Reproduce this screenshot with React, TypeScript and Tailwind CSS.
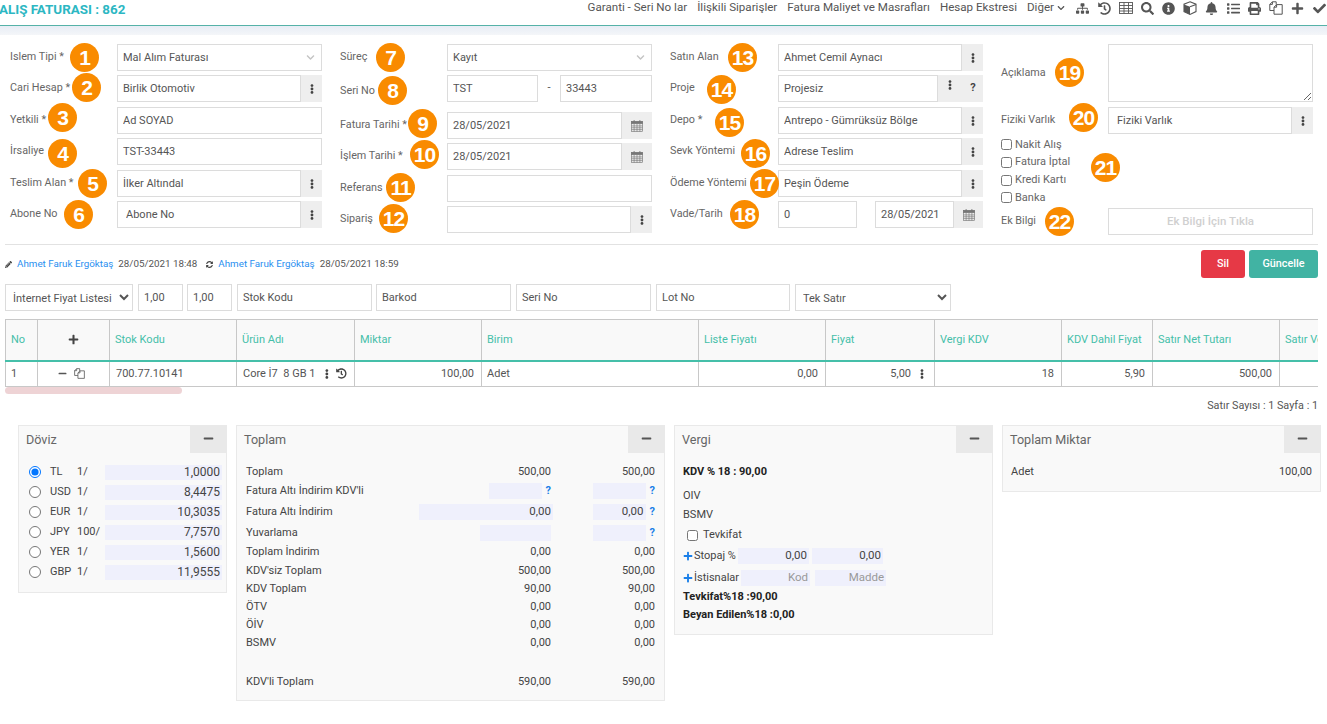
import React from "react";
import {
  FaSitemap, FaHistory, FaSearch, FaInfoCircle, FaBell, FaList, FaPrint,
  FaPlus, FaCheck, FaEllipsisV, FaPencilAlt, FaSyncAlt, FaMinus, FaChevronDown,
} from "react-icons/fa";

const inputCls = "h-full min-w-0 flex-1 border border-[#dcdcdc] bg-white px-[5px] text-[11px] text-[#555] outline-none";

function TableIcon() {
  return (
    <svg width="14" height="12" viewBox="0 0 14 12" fill="none" stroke="currentColor" strokeWidth="0.9">
      <rect x="0.5" y="0.5" width="13" height="11" />
      <path d="M0.5 3.5H13.5M0.5 6.5H13.5M0.5 9H13.5M5 0.5V11.5M9.5 0.5V11.5" />
    </svg>
  );
}

function CubeIcon() {
  return (
    <svg width="14" height="14" viewBox="0 0 14 14">
      <path d="M7 0.8 13 3.2V10.6L7 13.4 1 10.6V3.2Z" fill="none" stroke="currentColor" strokeWidth="1.1" />
      <path d="M1 3.4 7 5.8V13.4L1 10.6Z" fill="currentColor" />
      <path d="M7 5.8 13 3.4" stroke="currentColor" strokeWidth="1.1" />
    </svg>
  );
}

function FilesIcon({ size = 14 }: { size?: number }) {
  return (
    <svg width={size} height={size} viewBox="0 0 14 14" fill="none" stroke="currentColor" strokeWidth="1">
      <path d="M5 9.5H0.8V3.4L3.4 0.8H7.2V3.6" />
      <path d="M3.4 0.8V3.4H0.8" />
      <path d="M5 13.2V6.2L7.6 3.6H13.2V13.2Z" />
      <path d="M7.6 3.6V6.2H5" />
    </svg>
  );
}

function CalendarIcon() {
  return (
    <svg width="12" height="12" viewBox="0 0 13 13" fill="none" stroke="#777" strokeWidth="0.7">
      <rect x="0.5" y="1.8" width="12" height="10.7" />
      <rect x="0.5" y="1.8" width="12" height="2.2" fill="#777" />
      <path d="M0.5 6.4H12.5M0.5 8.4H12.5M0.5 10.4H12.5M3.4 4V12.5M6.5 4V12.5M9.6 4V12.5" />
      <path d="M3.4 0.4V2.4M9.6 0.4V2.4" strokeWidth="1.3" />
    </svg>
  );
}

function Badge({ n, pos }: { n: number; pos: string }) {
  return (
    <span className={"absolute z-10 flex h-[29px] w-[29px] items-center justify-center rounded-full bg-[#f98b00] font-['Liberation_Sans',sans-serif] text-[21px] font-bold tracking-[-1px] text-white " + pos}>
      {n}
    </span>
  );
}

function Addon({ w = "w-[21px]", children }: { w?: string; children: React.ReactNode }) {
  return <span className={"flex h-full shrink-0 items-center justify-center bg-[#eeeeee] text-[#444] " + w}>{children}</span>;
}

const Dots = () => <FaEllipsisV className="text-[10px]" />;

function Row({ label, badge, lw = "w-[107px]", className = "", labelCls = "", children }: { label: string; badge: React.ReactNode; lw?: string; className?: string; labelCls?: string; children: React.ReactNode }) {
  return (
    <div className={"relative flex h-[27px] items-center " + className}>
      <span className={"shrink-0 text-[10.8px] text-[#666] " + lw + " " + labelCls}>{label}</span>
      {badge}
      <div className="flex h-full min-w-0 flex-1 items-center">{children}</div>
    </div>
  );
}

function TextField({ value, pl = "" }: { value: string; pl?: string }) {
  return <input readOnly value={value} className={inputCls + " " + pl} />;
}

function PlainSelect({ value }: { value: string }) {
  return (
    <div className="flex h-full flex-1 items-center justify-between border border-[#dcdcdc] bg-white pl-[5px] pr-[6px] text-[11px] text-[#555]">
      <span className="pt-[1px]">{value}</span>
      <FaChevronDown className="text-[9px] text-[#c4c4c4]" />
    </div>
  );
}

function Panel({ title, w, h, children }: { title: string; w: string; h: string; children: React.ReactNode }) {
  return (
    <section className={"shrink-0 border border-[#e9e9e9] bg-[#f9f9f9] " + w + " " + h}>
      <div className="flex h-[27px] items-start justify-between">
        <span className="pl-[7px] pt-[5px] text-[12.6px] text-[#666]">{title}</span>
        <span className="flex h-[27px] w-[36px] items-center justify-center bg-[#e9e9e9] pb-[2px] text-[#555]">
          <FaMinus className="text-[11px]" />
        </span>
      </div>
      {children}
    </section>
  );
}

const rates = [
  ["TL", "1/", "1,0000"], ["USD", "1/", "8,4475"], ["EUR", "1/", "10,3035"],
  ["JPY", "100/", "7,7570"], ["YER", "1/", "1,5600"], ["GBP", "1/", "11,9555"],
];

function Q() {
  return <span className="text-[11px] font-bold text-[#1a7fe8]">?</span>;
}

function Tot({ label, h, a, b }: { label: string; h: string; a: React.ReactNode; b: React.ReactNode }) {
  return (
    <div className={"flex items-center text-[11px] text-[#444] " + h}>
      <span className="flex-1 whitespace-nowrap">{label}</span>
      <div className="flex w-[132px] items-center justify-end">{a}</div>
      <div className="ml-[42px] flex w-[62px] items-center justify-end">{b}</div>
    </div>
  );
}

const Shade = ({ w, children, cls = "" }: { w: string; children?: React.ReactNode; cls?: string }) => (
  <span className={"flex h-[16px] items-center justify-end bg-[#eff0fc] pr-[2px] text-[11.5px] text-[#444] " + w + " " + cls}>{children}</span>
);

const cols = ["w-[32px]", "w-[72px]", "w-[127px]", "w-[118px]", "w-[127px]", "w-[217px]", "w-[127px]", "w-[109px]", "w-[127px]", "w-[91px]", "w-[127px]", "w-[127px]"];
const heads = ["No", "", "Stok Kodu", "Ürün Adı", "Miktar", "Birim", "Liste Fiyatı", "Fiyat", "Vergi KDV", "KDV Dahil Fiyat", "Satır Net Tutarı", "Satır Vergi"];

export default function App() {
  const thCls = "border border-[#c8c8c8] border-b-0 bg-[#f9f9f9] px-[5px] text-left text-[11px] font-normal text-[#45bfa9] whitespace-nowrap overflow-hidden";
  const tdCls = "border border-[#c8c8c8] pl-[5px] pr-[7px] text-[11px] text-[#555] whitespace-nowrap overflow-hidden";
  const filterCls = "border border-[#dcdcdc] px-[5px] pt-[1px] outline-none";
  return (
    <div className="relative h-[724px] w-[1327px] overflow-hidden bg-white font-['Roboto',sans-serif]">
      <header className="flex h-[26px] items-start justify-between border-b border-[#55b2a8]">
        <h1 className="-ml-[1px] pt-[1px] text-[13.4px] font-bold leading-[18px] text-[#2cb7c3]">ALIŞ FATURASI : 862</h1>
        <div className="flex items-center text-[#555]">
          <nav className="flex h-[14px] items-center gap-[10px] text-[11.6px]">
            <span>Garanti - Seri No lar</span>
            <span>İlişkili Siparişler</span>
            <span>Fatura Maliyet ve Masrafları</span>
            <span>Hesap Ekstresi</span>
            <span className="flex items-center gap-[3px]">Diğer <FaChevronDown className="text-[8px]" /></span>
          </nav>
          <div className="ml-[7px] mr-[-3px] flex items-center text-[13px]">
            {[<FaSitemap />, <FaHistory />, <TableIcon />, <FaSearch />, <FaInfoCircle />, <CubeIcon />, <FaBell />, <FaList />, <FaPrint />, <FilesIcon />, <FaPlus />, <FaCheck />].map((icon, i) => (
              <span key={i} className="flex h-[16px] w-[21.5px] items-center justify-center">{icon}</span>
            ))}
          </div>
        </div>
      </header>
      <div className="h-[9px] bg-gradient-to-b from-[#e8edf5] to-[#f4f6f9]" />

      <form className="flex gap-[18px] pl-[10px] pt-[9px]">
        <div className="flex w-[312px] flex-col gap-[4px]">
          <Row label="Islem Tipi *" badge={<Badge n={1} pos="left-[60px] top-[-1px]" />}><PlainSelect value="Mal Alım Faturası" /></Row>
          <Row label="Cari Hesap *" className="mb-[1px]" badge={<Badge n={2} pos="left-[62px] top-[-2px]" />}><TextField value="Birlik Otomotiv" /><Addon><Dots /></Addon></Row>
          <Row label="Yetkili *" badge={<Badge n={3} pos="left-[38px] top-[-4px]" />}><TextField value="Ad SOYAD" /></Row>
          <Row label="İrsaliye" className="mb-[1px]" badge={<Badge n={4} pos="left-[38px] top-[1px]" />}><TextField value="TST-33443" /></Row>
          <Row label="Teslim Alan *" badge={<Badge n={5} pos="left-[68px] top-[-1px]" />}><TextField value="İlker Altındal" /><Addon><Dots /></Addon></Row>
          <Row label="Abone No" badge={<Badge n={6} pos="left-[54px] top-[-1px]" />}><TextField value="Abone No" pl="pl-[8px]" /><Addon><Dots /></Addon></Row>
        </div>

        <div className="flex w-[312px] flex-col gap-[4px]">
          <Row label="Süreç" badge={<Badge n={7} pos="left-[36px] top-[-1px]" />}><PlainSelect value="Kayıt" /></Row>
          <Row label="Seri No" labelCls="pt-[5px]" className="mb-[6px]" badge={<Badge n={8} pos="left-[38px] top-[1px]" />}>
            <TextField value="TST" />
            <span className="w-[22px] text-center text-[11px] text-[#555]">-</span>
            <input readOnly value="33443" className="h-full w-[92px] border border-[#dcdcdc] px-[5px] text-[11px] text-[#555] outline-none" />
          </Row>
          <Row label="Fatura Tarihi *" badge={<Badge n={9} pos="left-[68px] top-[-3px]" />}><TextField value="28/05/2021" /><Addon w="w-[30px]"><CalendarIcon /></Addon></Row>
          <Row label="İşlem Tarihi *" className="mb-[1px]" badge={<Badge n={10} pos="left-[70px] top-[-3px]" />}><TextField value="28/05/2021" /><Addon w="w-[30px]"><CalendarIcon /></Addon></Row>
          <Row label="Referans" badge={<Badge n={11} pos="left-[46px] top-[-2px]" />}><TextField value="" /></Row>
          <Row label="Sipariş" badge={<Badge n={12} pos="left-[39px] top-[-2px]" />}><TextField value="" /><Addon><Dots /></Addon></Row>
        </div>

        <div className="flex w-[313px] flex-col gap-[4px]">
          <Row lw="w-[108px]" label="Satın Alan" badge={<Badge n={13} pos="left-[58px] top-[-1px]" />}><TextField value="Ahmet Cemil Aynacı" /><Addon><Dots /></Addon></Row>
          <Row lw="w-[108px]" label="Proje" className="mb-[1px]" badge={<Badge n={14} pos="left-[37px] top-[0px]" />}><TextField value="Projesiz" /><Addon w="w-[45px]"><span className="flex w-full justify-around"><Dots /><span className="text-[11px] font-bold">?</span></span></Addon></Row>
          <Row lw="w-[108px]" label="Depo *" badge={<Badge n={15} pos="left-[45px] top-[1px]" />}><TextField value="Antrepo - Gümrüksüz Bölge" /><Addon><Dots /></Addon></Row>
          <Row lw="w-[108px]" label="Sevk Yöntemi" className="mb-[1px]" badge={<Badge n={16} pos="left-[71px] top-[1px]" />}><TextField value="Adrese Teslim" /><Addon><Dots /></Addon></Row>
          <Row lw="w-[108px]" label="Ödeme Yöntemi" badge={<Badge n={17} pos="left-[80px] top-[-1px]" />}><TextField value="Peşin Ödeme" /><Addon><Dots /></Addon></Row>
          <Row lw="w-[108px]" label="Vade/Tarih" badge={<Badge n={18} pos="left-[60px] top-[-1px]" />}>
            <input readOnly value="0" className="h-full w-[79px] border border-[#dcdcdc] px-[5px] text-[11px] text-[#555] outline-none" />
            <input readOnly value="28/05/2021" className="ml-[18px] h-full w-[79px] flex-1 min-w-0 border border-[#dcdcdc] px-[5px] text-[11px] text-[#555] outline-none" />
            <Addon w="w-[29px]"><CalendarIcon /></Addon>
          </Row>
        </div>

        <div className="flex w-[312px] flex-col">
          <div className="relative flex h-[58px] items-center">
            <span className="w-[107px] shrink-0 text-[10.8px] text-[#666]">Açıklama</span>
            <Badge n={19} pos="left-[54px] top-[14px]" />
            <textarea readOnly className="h-full flex-1 border border-[#dcdcdc] bg-white outline-none" />
          </div>
          <Row label="Fiziki Varlık" className="mt-[5px]" badge={<Badge n={20} pos="left-[68px] top-[-4px]" />}><TextField value="Fiziki Varlık" pl="pl-[8px]" /><Addon><Dots /></Addon></Row>
          <div className="relative flex h-[74px] flex-col pt-[2px]">
            <Badge n={21} pos="left-[90px] top-[19px]" />
            {["Nakit Alış", "Fatura İptal", "Kredi Kartı", "Banka"].map((t) => (
              <label key={t} className="flex h-[17.7px] items-center gap-[3px] text-[11px] text-[#666]">
                <input type="checkbox" className="h-[11px] w-[11px]" />
                {t}
              </label>
            ))}
          </div>
          <Row label="Ek Bilgi" badge={<Badge n={22} pos="left-[44px] top-[-1px]" />}>
            <span className="flex h-full flex-1 items-center justify-center border border-[#dcdcdc] pt-[1px] text-[11.5px] font-medium text-[#d0d0d0]">Ek Bilgi İçin Tıkla</span>
          </Row>
        </div>
      </form>

      <div className="ml-[5px] mt-[9px] w-[1313px] border-t border-[#e2e2e2]" />

      <div className="flex h-[33px] items-start justify-between pl-[5px] pr-[9px] pt-[5px]">
        <div className="flex h-[28px] items-center text-[9.8px] text-[#555]">
          <FaPencilAlt className="mr-[5px] text-[7px] text-[#444]" />
          <span className="text-[#2a8ff0]">Ahmet Faruk Ergöktaş</span>
          <span className="ml-[5px]">28/05/2021 18:48</span>
          <FaSyncAlt className="ml-[9px] mr-[5px] text-[7px] text-[#444]" />
          <span className="text-[#2a8ff0]">Ahmet Faruk Ergöktaş</span>
          <span className="ml-[5px]">28/05/2021 18:59</span>
        </div>
        <div className="flex gap-[4px]">
          <button type="button" className="h-[28px] w-[44px] rounded-[3px] bg-[#e63946] text-[10.8px] font-medium text-white">Sil</button>
          <button type="button" className="h-[28px] w-[69px] rounded-[3px] bg-[#41b3a3] text-[10.8px] font-medium text-white">Güncelle</button>
        </div>
      </div>

      <div className="mt-[6px] flex h-[27px] items-stretch pl-[5px] text-[11px] text-[#555]">
        <select className="mr-[5px] w-[128px] border border-[#dcdcdc] bg-white pl-[3px] pt-[1px] text-[11px] outline-none"><option>İnternet Fiyat Listesi</option></select>
        <input readOnly value="1,00" className={"mr-[4px] w-[45px] " + filterCls} />
        <input readOnly value="1,00" className={"mr-[5px] w-[45px] " + filterCls} />
        <input readOnly value="Stok Kodu" className={"mr-[4px] w-[135px] " + filterCls} />
        <input readOnly value="Barkod" className={"mr-[5px] w-[135px] " + filterCls} />
        <input readOnly value="Seri No" className={"mr-[5px] w-[135px] " + filterCls} />
        <input readOnly value="Lot No" className={"mr-[5px] w-[134px] " + filterCls} />
        <select className="w-[156px] border border-[#dcdcdc] bg-white pl-[3px] pt-[1px] text-[11px] outline-none"><option>Tek Satır</option></select>
      </div>

      <div className="ml-[5px] mt-[8px] h-[68px] w-[1313px] overflow-hidden">
        <table className="w-[1400px] table-fixed border-collapse">
          <colgroup>{cols.map((c, i) => <col key={i} className={c} />)}</colgroup>
          <thead>
            <tr className="h-[41px] border-b-2 border-[#45bfa9]">
              {heads.map((h, i) => (
                <th key={i} className={thCls}>
                  {i === 1 ? <span className="flex justify-center text-[#444]"><FaPlus className="text-[11px]" /></span> : h}
                </th>
              ))}
            </tr>
          </thead>
          <tbody>
            <tr className="h-[26px]">
              <td className={tdCls + " pl-[2px]"}>1</td>
              <td className={tdCls + " px-0"}>
                <span className="flex items-center justify-center gap-[7px] pr-[3px] text-[#555]"><FaMinus className="text-[9px]" /><FilesIcon size={11} /></span>
              </td>
              <td className={tdCls + " pl-[6px]"}>700.77.10141</td>
              <td className={tdCls + " pl-[6px] pr-0"}>
                <span className="flex items-center">
                  <span className="w-[79px]">Core İ7&nbsp; 8 GB 1</span>
                  <FaEllipsisV className="ml-[2px] text-[10px] text-[#444]" />
                  <FaHistory className="ml-[5px] text-[11px] text-[#444]" />
                </span>
              </td>
              <td className={tdCls + " text-right"}>100,00</td>
              <td className={tdCls}>Adet</td>
              <td className={tdCls + " text-right"}>0,00</td>
              <td className={tdCls + " pr-[3px]"}>
                <span className="flex items-center justify-end gap-[6px]">5,00 <FaEllipsisV className="text-[10px] text-[#444]" /></span>
              </td>
              <td className={tdCls + " text-right"}>18</td>
              <td className={tdCls + " text-right"}>5,90</td>
              <td className={tdCls + " text-right"}>500,00</td>
              <td className={tdCls}></td>
            </tr>
          </tbody>
        </table>
      </div>
      <div className="ml-[5px] h-[7px] w-[177px] rounded-full bg-[#eed3d5]" />

      <div className="pr-[9px] pt-[5px] text-right text-[10.8px] leading-[14px] text-[#555]">Satır Sayısı : 1 Sayfa : 1</div>

      <div className="mt-[12px] flex items-start gap-[9px] pl-[18px]">
        <Panel title="Döviz" w="w-[209px]" h="h-[168px]">
          <div className="pl-[10px] pr-[4px] pt-[9px]">
            {rates.map(([c, r, v], i) => (
              <div key={c} className="flex h-[20px] items-center text-[11px] text-[#444]">
                <input type="radio" name="cur" defaultChecked={i === 0} className="h-[12px] w-[12px]" />
                <span className="ml-[9px] w-[27px]">{c}</span>
                <span className="w-[28px]">{r}</span>
                <span className="flex h-[15px] flex-1 items-center justify-end bg-[#eff0fc] pr-[2px] text-[12px]">{v}</span>
              </div>
            ))}
          </div>
        </Panel>

        <Panel title="Toplam" w="w-[429px]" h="h-[276px]">
          <div className="pl-[9px] pr-[9px] pt-[10px]">
            <Tot label="Toplam" h="h-[18px]" a="500,00" b="500,00" />
            <Tot label="Fatura Altı İndirim KDV'li" h="h-[20px]" a={<><Shade w="w-[53px]" /><span className="ml-[4px]"><Q /></span></>} b={<><Shade w="w-[53px]" /><span className="ml-[4px]"><Q /></span></>} />
            <Tot label="Fatura Altı İndirim" h="h-[22px]" a={<Shade w="w-[134px]" cls="-mr-[2px]">0,00</Shade>} b={<><Shade w="w-[53px]">0,00</Shade><span className="ml-[4px]"><Q /></span></>} />
            <Tot label="Yuvarlama" h="h-[20px]" a={<Shade w="w-[71px]" />} b={<><Shade w="w-[53px]" /><span className="ml-[4px]"><Q /></span></>} />
            <Tot label="Toplam İndirim" h="h-[19px]" a="0,00" b="0,00" />
            <Tot label="KDV'siz Toplam" h="h-[18px]" a="500,00" b="500,00" />
            <Tot label="KDV Toplam" h="h-[18px]" a="90,00" b="90,00" />
            <Tot label="ÖTV" h="h-[18px]" a="0,00" b="0,00" />
            <Tot label="ÖİV" h="h-[18px]" a="0,00" b="0,00" />
            <Tot label="BSMV" h="h-[19px]" a="0,00" b="0,00" />
            <Tot label="KDV'li Toplam" h="h-[18px] mt-[20px]" a="590,00" b="590,00" />
          </div>
        </Panel>

        <Panel title="Vergi" w="w-[319px]" h="h-[210px]">
          <div className="pl-[8px] pt-[10px] text-[11px] text-[#444]">
            <div className="flex h-[18px] items-center font-bold text-[#222]">KDV % 18 : 90,00</div>
            <div className="mt-[5px] flex h-[20px] items-center">OIV</div>
            <div className="flex h-[18px] items-center">BSMV</div>
            <label className="flex h-[22px] items-center pl-[4px]"><input type="checkbox" className="mr-[5px] h-[11px] w-[11px]" />Tevkifat</label>
            <div className="flex h-[20px] items-center">
              <FaPlus className="text-[10px] text-[#1a7fe8]" />
              <span className="ml-[1px] w-[44px]">Stopaj %</span>
              <Shade w="w-[71px]">0,00</Shade>
              <Shade w="w-[71px]" cls="ml-[3px]">0,00</Shade>
            </div>
            <div className="flex h-[24px] items-center">
              <FaPlus className="text-[10px] text-[#1a7fe8]" />
              <span className="ml-[1px] w-[47px]">İstisnalar</span>
              <Shade w="w-[69px]" cls="text-[#999]">Kod</Shade>
              <Shade w="w-[71px]" cls="ml-[5px] text-[#999]">Madde</Shade>
            </div>
            <div className="flex h-[15px] items-center font-bold text-[#222]">Tevkifat%18 :90,00</div>
            <div className="mt-[1px] flex h-[18px] items-center font-bold text-[#222]">Beyan Edilen%18 :0,00</div>
          </div>
        </Panel>

        <Panel title="Toplam Miktar" w="w-[319px]" h="h-[67px]">
          <div className="mt-[10px] flex h-[18px] items-center justify-between px-[8px] text-[11px] text-[#444]">
            <span>Adet</span><span>100,00</span>
          </div>
        </Panel>
      </div>
    </div>
  );
}
